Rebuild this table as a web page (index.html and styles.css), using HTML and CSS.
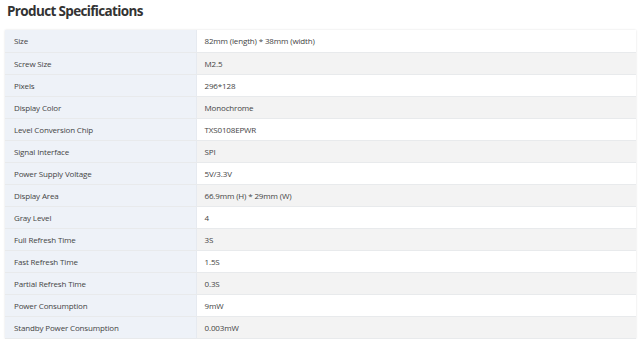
FILE: index.html
```html
<!DOCTYPE html>
<html>
<head>
<meta charset="utf-8">
<link rel="stylesheet" href="styles.css">
</head>
<body>
<div class="page">
  <h2 class="title">Product Specifications</h2>
  <table class="specs">
    <tbody>
      <tr><th>Size</th><td>82mm (length) * 38mm (width)</td></tr>
      <tr><th>Screw Size</th><td>M2.5</td></tr>
      <tr><th>Pixels</th><td>296*128</td></tr>
      <tr><th>Display Color</th><td>Monochrome</td></tr>
      <tr><th>Level Conversion Chip</th><td>TXS0108EPWR</td></tr>
      <tr><th>Signal Interface</th><td>SPI</td></tr>
      <tr><th>Power Supply Voltage</th><td>5V/3.3V</td></tr>
      <tr><th>Display Area</th><td>66.9mm (H) * 29mm (W)</td></tr>
      <tr><th>Gray Level</th><td>4</td></tr>
      <tr><th>Full Refresh Time</th><td>3S</td></tr>
      <tr><th>Fast Refresh Time</th><td>1.5S</td></tr>
      <tr><th>Partial Refresh Time</th><td>0.3S</td></tr>
      <tr><th>Power Consumption</th><td>9mW</td></tr>
      <tr><th>Standby Power Consumption</th><td>0.003mW</td></tr>
    </tbody>
  </table>
</div>
</body>
</html>
```
FILE: styles.css
```css
html, body {
  margin: 0;
  padding: 0;
  background: #ffffff;
}
.page {
  padding: 0 4px 0 5px;
  font-family: "Open Sans", "Noto Sans", sans-serif;
  color: #333;
}
.title {
  margin: 0;
  padding: 1px 0 0 2px;
  font-size: 13.5px;
  letter-spacing: -0.65px;
  line-height: 20px;
  font-weight: 700;
  color: #333;
  height: 30px;
  box-sizing: border-box;
}
.specs {
  width: 100%;
  border-collapse: collapse;
  font-size: 8px;
  letter-spacing: -0.15px;
  box-shadow: 0 0 2px rgba(0,0,0,0.12);
}
.specs th, .specs td {
  height: 22px;
  padding: 0 0 0 9px;
  text-align: left;
  font-weight: 400;
  color: #444;
  border-bottom: 1px solid #e8eaec;
  box-sizing: border-box;
}
.specs th {
  width: 191px;
  background: #eef2f8;
  border-right: 1px solid #e6eaf0;
}
.specs td {
  padding-left: 8px;
  background: #ffffff;
}
.specs tr:nth-child(even) td {
  background: #f3f3f3;
}
```
